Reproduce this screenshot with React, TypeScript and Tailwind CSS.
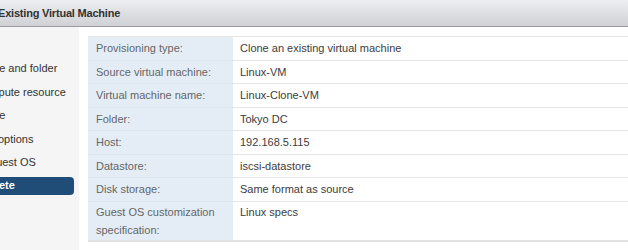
const steps = [
  { label: "Select a name and folder", sub: true },
  { label: "Select a compute resource", sub: true },
  { label: "Select storage", sub: true },
  { label: "Select clone options", sub: true },
  { label: "Customize guest OS", sub: true },
  { label: "Ready to complete", sub: false, active: true },
];

const rows: [string, string][] = [
  ["Provisioning type:", "Clone an existing virtual machine"],
  ["Source virtual machine:", "Linux-VM"],
  ["Virtual machine name:", "Linux-Clone-VM"],
  ["Folder:", "Tokyo DC"],
  ["Host:", "192.168.5.115"],
  ["Datastore:", "iscsi-datastore"],
  ["Disk storage:", "Same format as source"],
];

export default function App() {
  return (
    <div className="w-[628px] h-[250px] overflow-hidden bg-white font-['Liberation_Sans',Arial,sans-serif] text-[11px]">
      {/* Title bar */}
      <div className="h-[27px] flex items-center border-b border-[#9c9c9c] bg-gradient-to-b from-[#eceef0] to-[#cfd1d4] overflow-hidden">
        <span className="ml-[-2px] whitespace-nowrap font-bold text-[11px] tracking-[-0.2px] text-[#333]">Existing Virtual Machine</span>
      </div>

      <div className="flex h-[223px]">
        {/* Step navigator */}
        <div className="w-[79px] shrink-0 bg-[#f5f5f5] overflow-hidden pt-[30px]">
          <div className="ml-[-83px] w-[157px]">
            {steps.map((s) => (
              <div key={s.label} className="h-[23.4px] flex items-center">
                {s.active ? (
                  <div className="h-[18px] w-full flex items-center rounded-[4px] bg-[#1f4d78] text-white font-bold whitespace-nowrap">
                    {s.label}
                  </div>
                ) : (
                  <div className={`whitespace-nowrap text-[#333] ${s.sub ? "pl-[18px]" : ""}`}>{s.label}</div>
                )}
              </div>
            ))}
          </div>
        </div>

        {/* Summary table */}
        <div className="flex-1 pl-[9px] pt-[9px] overflow-hidden">
          <div className="w-[560px] border-t border-[#e6e6e6]">
            {rows.map(([k, v]) => (
              <div key={k} className="flex h-[23.5px]">
                <div className="w-[145px] shrink-0 bg-[#e4edf5] border-b border-[#dbe5ee] pl-[8px] flex items-center text-[#666] whitespace-nowrap">
                  {k}
                </div>
                <div className="flex-1 border-b border-[#e6e6e6] pl-[7px] flex items-center text-[#3c3c3c] whitespace-nowrap">
                  {v}
                </div>
              </div>
            ))}
            <div className="flex h-[40px] border-b-2 border-[#e2e2e2]">
              <div className="w-[145px] shrink-0 bg-[#e4edf5] pl-[8px] pt-[1px] leading-[18px] text-[#666]">
                Guest OS customization
                <br />
                specification:
              </div>
              <div className="flex-1 pl-[7px] pt-[1px] leading-[18px] text-[#3c3c3c]">Linux specs</div>
            </div>
          </div>
        </div>
      </div>
    </div>
  );
}
